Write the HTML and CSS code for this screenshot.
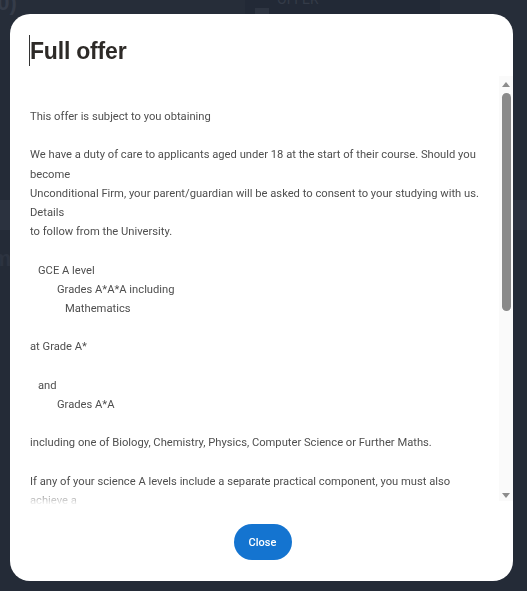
FILE: index.html
```html
<!DOCTYPE html>
<html lang="en">
<head>
<meta charset="utf-8">
<title>Full offer</title>
<link rel="stylesheet" href="styles.css">
</head>
<body>
<div class="page">
  <div class="page-top">
    <span class="page-count">(0)</span>
    <div class="page-tab"><span class="page-check"></span><span class="page-tab-text">OFFER</span></div>
  </div>
  <div class="page-band"></div>
  <div class="page-label">Statement</div>
</div>

<div class="overlay">
  <div class="modal" role="dialog" aria-labelledby="modal-title">
    <h2 class="modal-title" id="modal-title">Full offer</h2>
    <div class="modal-body">
      <div class="scroll">
        <div class="content">
          <p class="line">This offer is subject to you obtaining</p>
          <p class="line blank"></p>
          <p class="line">We have a duty of care to applicants aged under 18 at the start of their course. Should you</p>
          <p class="line">become</p>
          <p class="line">Unconditional Firm, your parent/guardian will be asked to consent to your studying with us.</p>
          <p class="line">Details</p>
          <p class="line">to follow from the University.</p>
          <p class="line blank"></p>
          <p class="line ind1">GCE A level</p>
          <p class="line ind2">Grades A*A*A including</p>
          <p class="line ind3">Mathematics</p>
          <p class="line blank"></p>
          <p class="line">at Grade A*</p>
          <p class="line blank"></p>
          <p class="line ind1">and</p>
          <p class="line ind2">Grades A*A</p>
          <p class="line blank"></p>
          <p class="line">including one of Biology, Chemistry, Physics, Computer Science or Further Maths.</p>
          <p class="line blank"></p>
          <p class="line">If any of your science A levels include a separate practical component, you must also</p>
          <p class="line">achieve a</p>
          <p class="line">Pass in this.</p>
        </div>
      </div>
      <div class="scrollbar" aria-hidden="true">
        <span class="arrow arrow-up"></span>
        <span class="thumb"></span>
        <span class="track-rest"></span>
        <span class="arrow arrow-down"></span>
      </div>
    </div>
    <div class="modal-actions">
      <button class="btn-close" type="button">Close</button>
    </div>
  </div>
</div>
</body>
</html>
```

FILE: styles.css
```css
* { box-sizing: border-box; }

html, body {
  margin: 0;
  padding: 0;
  width: 527px;
  height: 591px;
  overflow: hidden;
}

body {
  background: #242b37;
  font-family: Roboto, "Liberation Sans", sans-serif;
}

/* underlying page (dimmed) */
.page {
  display: flex;
  flex-direction: column;
  height: 591px;
}

.page-top {
  display: flex;
  height: 40px;
  background: #262d39;
}

.page-count {
  font: bold 22px/1 "Liberation Sans", sans-serif;
  color: #353c49;
  margin: -8px 0 0 -10px;
  width: 255px;
}

.page-tab {
  display: flex;
  align-items: flex-end;
  gap: 8px;
  width: 195px;
  height: 14px;
  background: #222936;
  color: #343b48;
  font-size: 14px;
  line-height: 14px;
  padding-left: 10px;
  overflow: hidden;
}

.page-check {
  width: 14px;
  height: 6px;
  background: #2e3542;
}

.page-tab-text {
  margin-bottom: 8px;
}

.page-band {
  margin-top: 160px;
  height: 30px;
  background: #2b323f;
}

.page-label {
  margin: 16px 0 0 -62px;
  font: bold 22px "Liberation Sans", sans-serif;
  color: #2c3340;
}

/* modal overlay */
.overlay {
  position: fixed;
  inset: 0;
  padding: 14px 14px 10px 10px;
  display: flex;
}

.modal {
  flex: 1;
  display: flex;
  flex-direction: column;
  background: #ffffff;
  border-radius: 20px;
  overflow: hidden;
}

.modal-title {
  margin: 21px 0 0 19px;
  height: 31px;
  border-left: 1px solid #333;
  font: bold 23px/32px "Liberation Sans", Arial, sans-serif;
  color: #2d2a27;
  letter-spacing: -0.2px;
}

.modal-body {
  margin-top: 10px;
  height: 430px;
  display: flex;
}

.scroll {
  flex: 1;
  overflow: hidden;
  padding-left: 20px;
  -webkit-mask-image: linear-gradient(to bottom, #000 0, #000 413px, rgba(0,0,0,0.12) 427px, rgba(0,0,0,0) 430px);
  mask-image: linear-gradient(to bottom, #000 0, #000 413px, rgba(0,0,0,0.12) 427px, rgba(0,0,0,0) 430px);
}

.content {
  padding-top: 31px;
}

.line {
  margin: 0;
  font-size: 11.2px;
  line-height: 19.2px;
  height: 19.2px;
  color: #4f4f4f;
  white-space: nowrap;
}

.ind1 { padding-left: 8px; }
.ind2 { padding-left: 27px; }
.ind3 { padding-left: 35px; }

/* custom scrollbar column */
.scrollbar {
  width: 14px;
  height: 425px;
  background: #fafafa;
  display: flex;
  flex-direction: column;
  align-items: center;
  padding: 6px 0 3px;
}

.arrow {
  width: 0;
  height: 0;
  border-left: 4px solid transparent;
  border-right: 4px solid transparent;
}

.arrow-up {
  border-bottom: 5px solid #8c8c8c;
}

.arrow-down {
  border-top: 5px solid #8c8c8c;
}

.thumb {
  margin-top: 6px;
  width: 9px;
  height: 218px;
  border-radius: 5px;
  background: #8a8a8a;
  margin-left: 1px;
}

.track-rest {
  flex: 1;
}

.modal-actions {
  display: flex;
  justify-content: center;
  padding-top: 18px;
}

.btn-close {
  width: 58px;
  height: 36px;
  border: none;
  border-radius: 18px;
  background: #1474d0;
  color: #ffffff;
  font: 500 11px Roboto, "Liberation Sans", sans-serif;
  padding: 0;
  margin-left: 2px;
}
```
